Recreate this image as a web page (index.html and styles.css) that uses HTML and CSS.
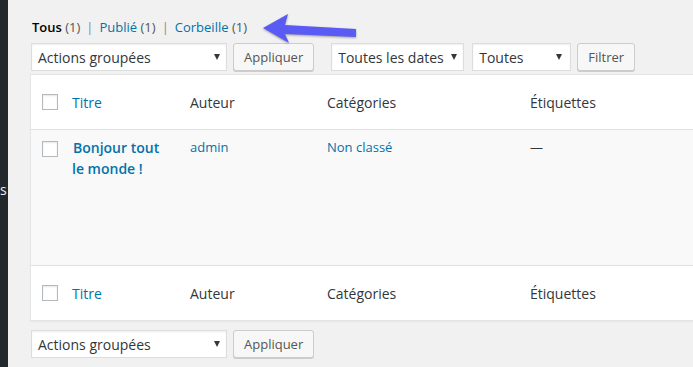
FILE: index.html
```html
<!DOCTYPE html>
<html lang="fr">
<head>
  <meta charset="UTF-8">
  <meta name="viewport" content="width=device-width, initial-scale=1.0">
  <title>Articles</title>
  <link rel="stylesheet" href="styles.css">
</head>
<body>
  <div class="layout">
    <div class="sidebar"><span class="menu-cut">s</span></div>

    <div class="content">
      <ul class="subsubsub">
        <li><a class="current">Tous <span class="count">(1)</span></a><span class="sep">|</span></li>
        <li><a>Publié <span class="count">(1)</span></a><span class="sep">|</span></li>
        <li><a>Corbeille <span class="count">(1)</span></a></li>
      </ul>

      <div class="tablenav">
        <div class="select bulk"><span>Actions groupées</span><i class="caret"></i></div>
        <button class="button">Appliquer</button>
        <div class="select dates"><span>Toutes les dates</span><i class="caret"></i></div>
        <div class="select cats"><span>Toutes</span><i class="caret"></i></div>
        <button class="button">Filtrer</button>
      </div>

      <table class="posts">
        <colgroup>
          <col class="c-cb">
          <col class="c-title">
          <col class="c-author">
          <col class="c-cats">
          <col class="c-tags">
        </colgroup>
        <thead>
          <tr>
            <th class="check"><span class="cb"></span></th>
            <th><a>Titre</a></th>
            <th>Auteur</th>
            <th>Catégories</th>
            <th>Étiquettes</th>
          </tr>
        </thead>
        <tbody>
          <tr>
            <td class="check"><span class="cb"></span></td>
            <td><a class="row-title">Bonjour tout le monde !</a></td>
            <td><a>admin</a></td>
            <td><a>Non classé</a></td>
            <td class="none">—</td>
          </tr>
        </tbody>
        <tfoot>
          <tr>
            <th class="check"><span class="cb"></span></th>
            <th><a>Titre</a></th>
            <th>Auteur</th>
            <th>Catégories</th>
            <th>Étiquettes</th>
          </tr>
        </tfoot>
      </table>

      <div class="tablenav bottom">
        <div class="select bulk"><span>Actions groupées</span><i class="caret"></i></div>
        <button class="button">Appliquer</button>
      </div>
    </div>
  </div>

  <!-- annotation arrow drawn over the screenshot -->
  <svg class="arrow" width="104" height="40" viewBox="0 0 104 40">
    <polygon points="5,18 30,4 27,15 98,19 98,27 27,24 31,33" fill="#5a5af4"/>
  </svg>
</body>
</html>
```

FILE: styles.css
```css
body {
  margin: 0;
  background: #f1f1f1;
  font-family: 'Open Sans', 'Liberation Sans', sans-serif;
  font-size: 13px;
  color: #444;
  height: 367px;
  overflow: hidden;
  position: relative;
}

a {
  color: #0073aa;
  text-decoration: none;
}

.layout {
  display: flex;
  height: 367px;
}

.sidebar {
  width: 8px;
  flex: none;
  background: #23282d;
  overflow: hidden;
  padding-top: 180px;
  box-sizing: border-box;
}

.menu-cut {
  display: block;
  color: #eee;
  font-size: 14px;
  line-height: 20px;
}

.content {
  flex: 1;
  min-width: 0;
  padding: 17px 0 0 22px;
}

/* status links */
.subsubsub {
  list-style: none;
  margin: 0;
  padding: 0 0 0 2px;
  height: 20px;
  line-height: 20px;
  display: flex;
  color: #666;
}

.subsubsub .current {
  color: #000;
  font-weight: 600;
}

.subsubsub .count {
  color: #555;
  font-weight: 400;
}

.subsubsub .sep {
  color: #888;
  margin: 0 6px;
}

/* filters bar */
.tablenav {
  display: flex;
  margin-top: 6px;
  padding-left: 1px;
  height: 28px;
}

.tablenav.bottom {
  margin-top: 9px;
}

.select {
  height: 28px;
  box-sizing: border-box;
  display: flex;
  align-items: center;
  justify-content: space-between;
  padding: 0 6px 0 6px;
  background: #fff;
  border: 1px solid #ddd;
  box-shadow: inset 0 1px 2px rgba(0, 0, 0, 0.07);
  font-size: 14px;
  color: #32373c;
}

.select.bulk { width: 196px; margin-right: 6px; }
.select.dates { width: 133px; margin: 0 8px 0 17px; }
.select.cats { width: 99px; margin-right: 6px; padding-right: 8px; }

.caret {
  width: 0;
  height: 0;
  border-left: 3.5px solid transparent;
  border-right: 3.5px solid transparent;
  border-top: 6px solid #32373c;
}

.button {
  height: 28px;
  box-sizing: border-box;
  padding: 0 10px 1px;
  border: 1px solid #ccc;
  border-radius: 3px;
  background: #f7f7f7;
  box-shadow: 0 1px 0 #ccc;
  color: #555;
  font-family: inherit;
  font-size: 13px;
}

/* posts table */
.posts {
  margin-top: 3px;
  width: 741px;
  table-layout: fixed;
  border-spacing: 0;
  background: #fff;
  border: 1px solid #e5e5e5;
  box-shadow: 0 1px 1px rgba(0, 0, 0, 0.04);
}

.c-cb { width: 31px; }
.c-title { width: 118px; }
.c-author { width: 137px; }
.c-cats { width: 203px; }
.c-tags { width: 250px; }

.posts th,
.posts td {
  padding: 0 10px;
  text-align: left;
}

.posts th {
  font-size: 14px;
  font-weight: 400;
  color: #32373c;
  vertical-align: middle;
}

.posts thead tr { height: 55px; }
.posts thead th { border-bottom: 1px solid #e1e1e1; }
.posts tfoot tr { height: 55px; }
.posts tfoot th { border-top: 1px solid #e1e1e1; }

.posts tbody tr {
  height: 135px;
  background: #f9f9f9;
}

.posts td {
  vertical-align: top;
  padding-top: 8px;
  line-height: 19.5px;
}

.posts .check {
  padding: 0 0 0 11px;
}

.posts td.check {
  padding-top: 11px;
}

.cb {
  display: block;
  width: 16px;
  height: 16px;
  box-sizing: border-box;
  border: 1px solid #b4b9be;
  background: #fff;
  box-shadow: inset 0 1px 2px rgba(0, 0, 0, 0.1);
}

.row-title {
  font-size: 14px;
  font-weight: 600;
  padding-left: 1px;
}

.none {
  color: #32373c;
}

.arrow {
  position: absolute;
  left: 258px;
  top: 10px;
  filter: drop-shadow(0 1px 1px rgba(0, 0, 0, 0.35));
}
```
